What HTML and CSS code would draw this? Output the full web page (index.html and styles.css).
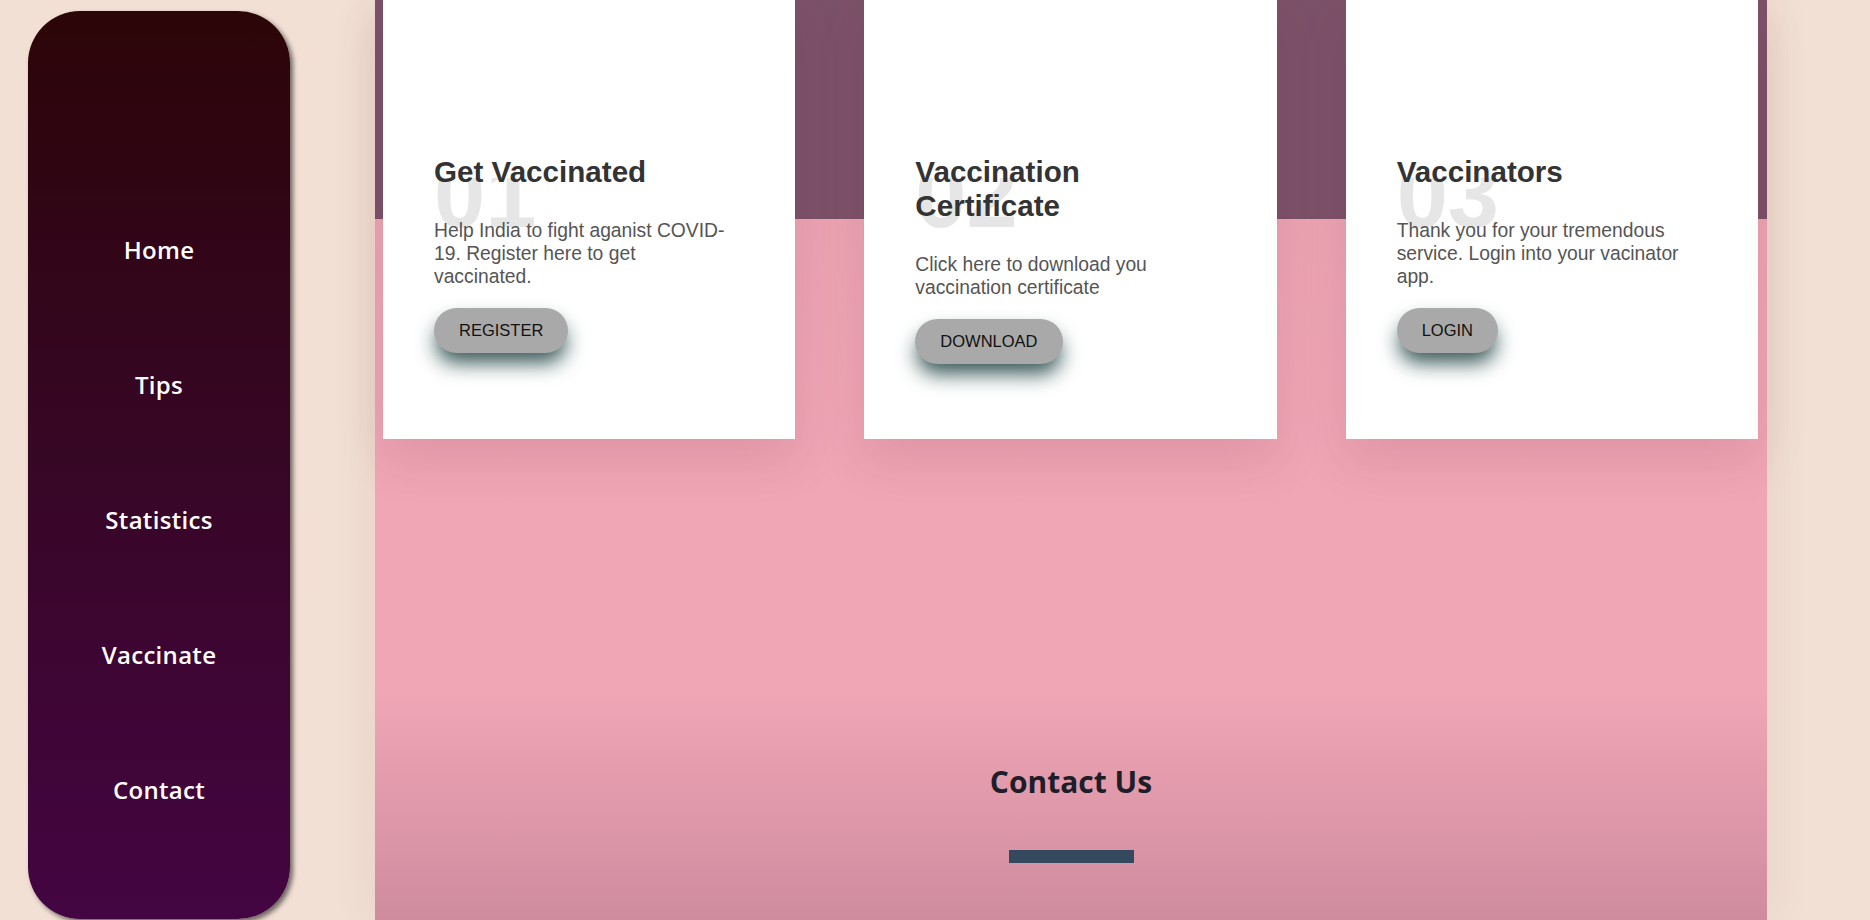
FILE: index.html
```html
<!DOCTYPE html>
<html lang="en">
<head>
<meta charset="utf-8">
<title>Vaccination</title>
<link rel="stylesheet" href="styles.css">
</head>
<body>
<aside class="sidebar">
  <nav class="nav">
    <a class="nav-link" href="#">Home</a>
    <a class="nav-link" href="#">Tips</a>
    <a class="nav-link" href="#">Statistics</a>
    <a class="nav-link" href="#">Vaccinate</a>
    <a class="nav-link" href="#">Contact</a>
  </nav>
</aside>
<main class="main">
  <section class="cards">
    <article class="card">
      <div class="num">01</div>
      <h2 class="card-title">Get Vaccinated</h2>
      <p class="card-text">Help India to fight aganist COVID-19. Register here to get vaccinated.</p>
      <a class="btn" href="#">REGISTER</a>
    </article>
    <article class="card">
      <div class="num">02</div>
      <h2 class="card-title">Vaccination Certificate</h2>
      <p class="card-text">Click here to download you vaccination certificate</p>
      <a class="btn" href="#">DOWNLOAD</a>
    </article>
    <article class="card">
      <div class="num">03</div>
      <h2 class="card-title">Vaccinators</h2>
      <p class="card-text">Thank you for your tremendous service. Login into your vacinator app.</p>
      <a class="btn" href="#">LOGIN</a>
    </article>
  </section>
  <section class="contact">
    <h2 class="contact-title">Contact Us</h2>
    <div class="contact-bar"></div>
  </section>
</main>
</body>
</html>
```
FILE: styles.css
```css
* { box-sizing: border-box; }

html, body {
  margin: 0;
  height: 920px;
  overflow: hidden;
}

body {
  background: #f2e0d5;
  display: flex;
  align-items: flex-start;
  font-family: "Liberation Sans", Arial, sans-serif;
}

.sidebar {
  flex: 0 0 262px;
  width: 262px;
  height: 908px;
  margin: 11px 0 0 28px;
  border-radius: 52px;
  background: linear-gradient(to bottom, #2c0508 0%, #370626 50%, #440542 100%);
  box-shadow: 3px 3px 5px rgba(0, 0, 0, 0.55);
}

.nav {
  display: flex;
  flex-direction: column;
  padding-top: 171px;
}

.nav-link {
  height: 135px;
  display: flex;
  align-items: center;
  justify-content: center;
  color: #fff;
  text-decoration: none;
  font-family: "Open Sans", "Noto Sans", sans-serif;
  font-weight: 600;
  font-size: 24px;
  letter-spacing: 0.3px;
}

.main {
  flex: 0 0 1392px;
  width: 1392px;
  height: 920px;
  margin-left: 85px;
  background: linear-gradient(to bottom,
    #7b5169 0px, #7b5169 219px,
    #eba3b2 219px, #f0a6b5 520px,
    #f0a6b5 690px, #cf8c9f 920px);
  box-shadow: 0 0 40px rgba(150, 90, 60, 0.12);
}

.cards {
  display: flex;
  gap: 69px;
  padding: 0 9px 0 8px;
  height: 439px;
}

.card {
  flex: 1;
  position: relative;
  background: #fff;
  padding: 155px 57px 0 51px;
  box-shadow: 0 20px 45px rgba(120, 40, 60, 0.13);
}

.num {
  position: absolute;
  top: 178px;
  left: 51px;
  height: 50px;
  overflow: hidden;
  font-weight: 700;
  font-size: 92px;
  line-height: 34px;
  color: #e6e6e6;
  z-index: 0;
}

.card-title {
  position: relative;
  z-index: 1;
  margin: 0;
  font-size: 29.6px;
  line-height: 34px;
  font-weight: 700;
  color: #333;
}

.card-text {
  position: relative;
  z-index: 1;
  margin: 30px 0 20px;
  font-size: 19.3px;
  line-height: 23px;
  color: #555;
}

.btn {
  display: inline-block;
  padding: 13px 25px;
  border-radius: 25px;
  background: #a9a9a9;
  color: #111;
  font-size: 16.5px;
  line-height: 19px;
  text-decoration: none;
  box-shadow: 0 12px 20px -2px rgba(47, 79, 79, 0.95);
}

.contact {
  padding-top: 322px;
  text-align: center;
}

.contact-title {
  margin: 0;
  font-family: "Open Sans", "Noto Sans", sans-serif;
  font-weight: 700;
  font-size: 30px;
  line-height: 41px;
  color: #1e1e2a;
}

.contact-bar {
  width: 125px;
  height: 13px;
  margin: 48px auto 0;
  background: #34495e;
}
```
